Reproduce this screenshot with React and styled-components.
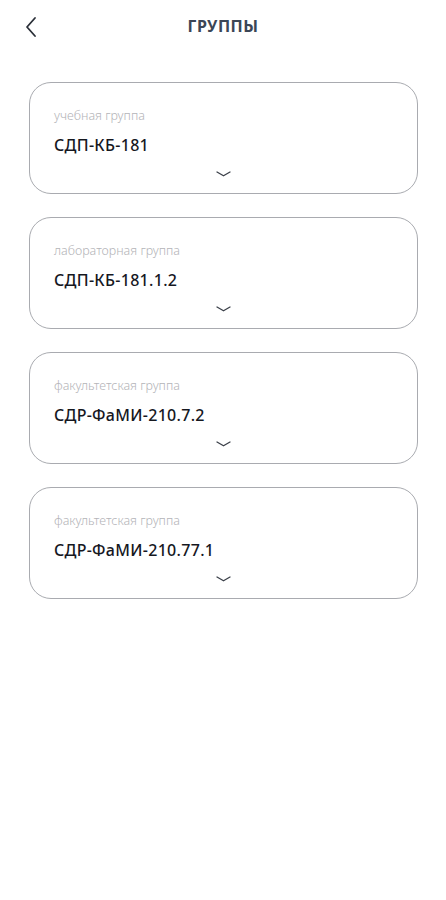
import React from 'react'
import styled, { createGlobalStyle } from 'styled-components';

const GlobalStyle = createGlobalStyle`
  body {
    margin: 0;
    background: #ffffff;
    font-family: "Noto Sans", "Open Sans", sans-serif;
  }
`;

const groups = [
  { label: 'учебная группа', value: 'СДП-КБ-181' },
  { label: 'лабораторная группа', value: 'СДП-КБ-181.1.2' },
  { label: 'факультетская группа', value: 'СДР-ФаМИ-210.7.2' },
  { label: 'факультетская группа', value: 'СДР-ФаМИ-210.77.1' },
];

export default function App() {
  return (
    <>
      <GlobalStyle />
      <Page>
        <Header>
          <BackButton aria-label="назад">
            <svg width="14" height="22" viewBox="0 0 14 22" fill="none">
              <path d="M11 2 L3 11 L11 20" stroke="#2a2f38" strokeWidth="1.8" strokeLinecap="round" strokeLinejoin="round" />
            </svg>
          </BackButton>
          <Title>ГРУППЫ</Title>
        </Header>
        <List>
          {groups.map((g, i) => (
            <Card key={i}>
              <Label>{g.label}</Label>
              <Value>{g.value}</Value>
              <Chevron>
                <svg width="15" height="6" viewBox="0 0 15 6" fill="none">
                  <path d="M1 1 L7.5 4.8 L14 1" stroke="#3a3f48" strokeWidth="1.3" strokeLinecap="round" strokeLinejoin="round" />
                </svg>
              </Chevron>
            </Card>
          ))}
        </List>
      </Page>
    </>
  )
}

const Page = styled.div`
  width: 446px;
  min-height: 900px;
  background: #ffffff;
`;

const Header = styled.div`
  position: relative;
  height: 55px;
  display: flex;
  align-items: center;
  justify-content: center;
`;

const BackButton = styled.button`
  position: absolute;
  left: 24px;
  top: 16px;
  background: none;
  border: none;
  padding: 0;
  display: flex;
  cursor: pointer;
`;

const Title = styled.h1`
  margin: 0 0 3px 0;
  font-size: 16px;
  font-weight: 700;
  letter-spacing: 0.5px;
  color: #3b4656;
  font-family: "Noto Sans", sans-serif;
`;

const List = styled.div`
  display: flex;
  flex-direction: column;
  gap: 23px;
  padding: 27px 28px 0 29px;
`;

const Card = styled.div`
  height: 112px;
  box-sizing: border-box;
  border: 1px solid #a9abb0;
  border-radius: 22px;
  padding: 24px 24px 0 24px;
  display: flex;
  flex-direction: column;
`;

const Label = styled.div`
  font-size: 12.5px;
  font-weight: 300;
  color: #b4b4b8;
  line-height: 17px;
`;

const Value = styled.div`
  margin-top: 11px;
  font-size: 16px;
  font-weight: 500;
  letter-spacing: 0.3px;
  color: #16181f;
  line-height: 20px;
`;

const Chevron = styled.div`
  display: flex;
  justify-content: center;
  margin-top: 16px;
`;
